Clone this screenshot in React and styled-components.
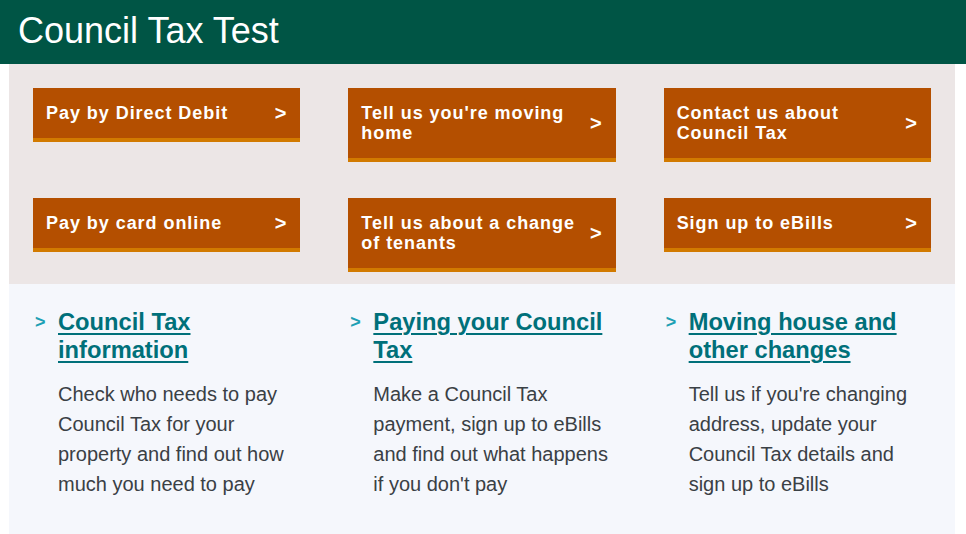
import React from "react";
import styled, { createGlobalStyle } from "styled-components";

const GlobalStyle = createGlobalStyle`
    body {
        margin: 0;
        background: #ffffff;
        font-family: "Liberation Sans", Arial, sans-serif;
    }
`;

const Header = styled.header`
    height: 64px;
    background-color: #005545;
    display: flex;
    align-items: center;
    padding: 0 18px 2px;
    box-sizing: border-box;
`;

const Title = styled.h1`
    margin: 0;
    color: #ffffff;
    font-size: 36px;
    font-weight: 400;
`;

const Panel = styled.main`
    margin: 0 11px 0 9px;
`;

const ActionBand = styled.section`
    background-color: #ece6e6;
    padding: 24px 24px 12px;
    display: grid;
    grid-template-columns: repeat(3, 1fr);
    column-gap: 48px;
    row-gap: 36px;
    align-items: start;
`;

const ActionButton = styled.a`
    display: flex;
    align-items: center;
    background-color: #b44f00;
    border-bottom: 4px solid #d27a00;
    padding: 15px 14px 15px 13px;
    color: #ffffff;
    text-decoration: none;
    font-weight: 700;
    font-size: 18px;
    line-height: 20px;
    letter-spacing: 0.95px;
`;

const ActionLabel = styled.span`
    flex: 1;
    padding-right: 8px;
`;

const Chevron = styled.span`
    font-size: 20px;
    font-weight: 700;
    letter-spacing: 0;
`;

const TopicBand = styled.section`
    background-color: #f5f7fc;
    padding: 24px 24px 60px;
    display: grid;
    grid-template-columns: repeat(3, 1fr);
    column-gap: 48px;
`;

const Topic = styled.div`
    display: grid;
    grid-template-columns: 25px 1fr;
`;

const Marker = styled.span`
    color: #1ea0b4;
    font-weight: 700;
    font-size: 18px;
    line-height: 28px;
    padding-left: 2px;
`;

const TopicLink = styled.a`
    color: #00707a;
    font-weight: 700;
    font-size: 23.7px;
    line-height: 28px;
    text-decoration: underline;
    text-decoration-thickness: 2px;
    text-underline-offset: 3px;
`;

const TopicText = styled.p`
    grid-column: 2;
    margin: 15px 0 0;
    color: #3a4045;
    font-size: 20px;
    line-height: 30px;
`;

const actions = [
    "Pay by Direct Debit",
    "Tell us you're moving home",
    "Contact us about Council Tax",
    "Pay by card online",
    "Tell us about a change of tenants",
    "Sign up to eBills",
];

const topics = [
    {
        title: "Council Tax information",
        text: "Check who needs to pay Council Tax for your property and find out how much you need to pay",
    },
    {
        title: "Paying your Council Tax",
        text: "Make a Council Tax payment, sign up to eBills and find out what happens if you don't pay",
    },
    {
        title: "Moving house and other changes",
        text: "Tell us if you're changing address, update your Council Tax details and sign up to eBills",
    },
];

export default function App() {
    return (
        <>
            <GlobalStyle />
            <Header>
                <Title>Council Tax Test</Title>
            </Header>
            <Panel>
                <ActionBand>
                    {actions.map((label) => (
                        <ActionButton href="#" key={label}>
                            <ActionLabel>{label}</ActionLabel>
                            <Chevron>&gt;</Chevron>
                        </ActionButton>
                    ))}
                </ActionBand>
                <TopicBand>
                    {topics.map((t) => (
                        <Topic key={t.title}>
                            <Marker>&gt;</Marker>
                            <div>
                                <TopicLink href="#">{t.title}</TopicLink>
                            </div>
                            <TopicText>{t.text}</TopicText>
                        </Topic>
                    ))}
                </TopicBand>
            </Panel>
        </>
    );
}
